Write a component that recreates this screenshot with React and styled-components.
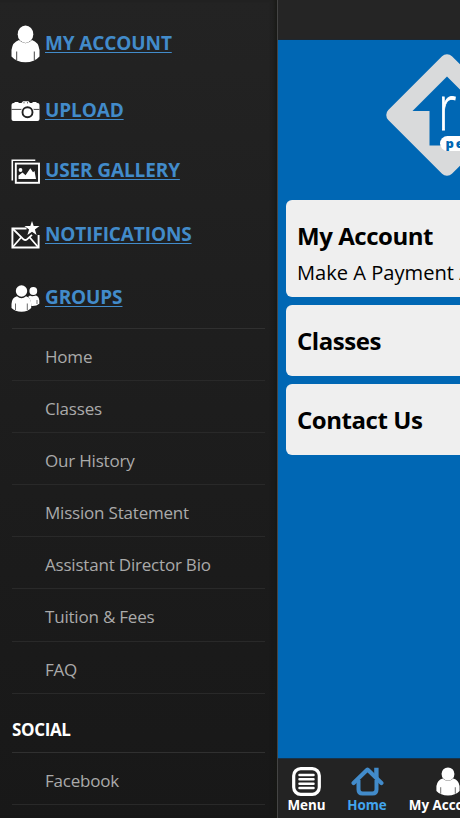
import React from "react";
import styled, { createGlobalStyle } from "styled-components";

const menuItems = [
  { label: "MY ACCOUNT", icon: PersonIcon, height: 88 },
  { label: "UPLOAD", icon: CameraIcon, height: 46 },
  { label: "USER GALLERY", icon: GalleryIcon, height: 75 },
  { label: "NOTIFICATIONS", icon: EnvelopeIcon, height: 52 },
  { label: "GROUPS", icon: GroupIcon, height: 66.5, offset: 8 },
];

const groupLinks = [
  "Home",
  "Classes",
  "Our History",
  "Mission Statement",
  "Assistant Director Bio",
  "Tuition & Fees",
  "FAQ",
];

const App = () => {
  return (
    <>
      <GlobalStyle />
      <Screen>
        <Sidebar>
          <nav>
            {menuItems.map(({ label, icon: Icon, height, offset }) => (
              <MenuItem key={label} $height={height} $offset={offset}>
                <Icon />
                <MenuLink href="#">{label}</MenuLink>
              </MenuItem>
            ))}
          </nav>
          <LinkList>
            {groupLinks.map((label) => (
              <LinkRow key={label}>{label}</LinkRow>
            ))}
          </LinkList>
          <SectionTitle>SOCIAL</SectionTitle>
          <LinkList>
            <LinkRow>Facebook</LinkRow>
          </LinkList>
        </Sidebar>
        <Main>
          <TopBar />
          <Content>
            <LogoWrap>
              <Logo />
            </LogoWrap>
            <Cards>
              <Card $height={97} $offset={10}>
                <CardTitle>My Account</CardTitle>
                <CardText>Make A Payment And More</CardText>
              </Card>
              <Card $height={71} $offset={1}>
                <CardTitle>Classes</CardTitle>
              </Card>
              <Card $height={71} $offset={1}>
                <CardTitle>Contact Us</CardTitle>
              </Card>
            </Cards>
          </Content>
          <TabBar>
            <Tab $width={57}>
              <MenuIcon />
              <span>Menu</span>
            </Tab>
            <Tab $width={64} $active>
              <HomeIcon />
              <span>Home</span>
            </Tab>
            <Tab $width={98}>
              <PersonIcon width={24} height={29} />
              <span>My Account</span>
            </Tab>
          </TabBar>
        </Main>
      </Screen>
    </>
  );
};

export default App;

function PersonIcon({ width = 29, height = 38 }) {
  return (
    <svg width={width} height={height} viewBox="0 0 29 38" preserveAspectRatio="none">
      <path
        d="M8 15Q1.500 17 .5 25v6.500Q5.500 37.300 14.500 37.300T28.500 31.500V25Q27.500 17 21 15Q14.500 21.500 8 15Z"
        fill="#fff"
      />
      <ellipse cx="14.500" cy="9.200" rx="7.800" ry="8.700" fill="#fff" />
      <path d="M5.700 26.500v8.500M23.300 26.500v8.500" stroke="#444" strokeWidth="1" />
    </svg>
  );
}

function CameraIcon() {
  return (
    <svg width="29" height="20" viewBox="0 0 29 20">
      <path d="M3.500 1h4v2h-4zM10.500 2 12 .3h5.500L19 2v1h-8.500zM21.500 1h4v2h-4z" fill="#fff" />
      <rect x=".5" y="2" width="28" height="18" rx="2" fill="#fff" />
      <path d="M.5 8.400h28" stroke="#333" strokeWidth=".9" />
      <path d="M12.500 1.800h1M16 1.800h1" stroke="#333" strokeWidth="1" />
      <circle cx="16.500" cy="11.200" r="6.700" fill="#fff" />
      <circle cx="16.500" cy="11.200" r="5" fill="#fff" stroke="#222" strokeWidth="1.900" />
    </svg>
  );
}

function GalleryIcon() {
  return (
    <svg width="29" height="25" viewBox="0 0 29 25">
      <path d="M1.300 21.500V1.200h23" fill="none" stroke="#fff" strokeWidth="1.600" />
      <rect x="4.800" y="4.600" width="23.200" height="19.200" fill="none" stroke="#fff" strokeWidth="1.900" />
      <path d="M7.500 20v-3.500l4-3 3 2.800 4.800-7 2.700 4 1.500-1.300L25 20Z" fill="#fff" />
      <circle cx="9.500" cy="11" r="1.900" fill="#fff" />
    </svg>
  );
}

function EnvelopeIcon() {
  return (
    <svg width="29" height="28" viewBox="0 0 29 28">
      <path
        d="M15.500 7.500H1.400v19h26.200V14"
        fill="none"
        stroke="#fff"
        strokeWidth="1.900"
      />
      <path
        d="M1.500 7.500 12.500 18.300q1.800 1.500 3.500 0l5-4.500M1.800 26l8.200-9.500M27 26l-8.200-9.500"
        fill="none"
        stroke="#fff"
        strokeWidth="1.800"
      />
      <path
        d="m21 0 1.700 5h5.800l-4.600 3.500 1.700 5.500-4.600-3.300-4.600 3.300 1.700-5.500-4.600-3.500h5.800Z"
        fill="#fff"
      />
    </svg>
  );
}

function GroupIcon() {
  return (
    <svg width="29" height="27" viewBox="0 0 29 27">
      <path d="M19 10.500q1.500 1.500 6 0 3 1 3.300 5v3.300q-3 2.600-8 2.200Q20 14 17 12Z" fill="#fff" />
      <circle cx="22.300" cy="6" r="3.900" fill="#fff" />
      <path d="M26 15v4" stroke="#333" strokeWidth=".7" />
      <path
        d="M6 11.200Q.8 12.500 .5 19v4Q4 26.700 10.500 26.700T20.200 23v-4Q20 12.500 15 11.200q-4.500 4-9 0Z"
        fill="#fff"
      />
      <circle cx="10.500" cy="6" r="5.700" fill="#fff" />
      <path d="M4.500 18.500V25M16.300 18.500V25" stroke="#444" strokeWidth=".8" />
    </svg>
  );
}

function MenuIcon() {
  return (
    <svg width="29" height="29" viewBox="0 0 29 29">
      <rect x="1.700" y="1.700" width="25.600" height="25.600" rx="7" fill="none" stroke="#fff" strokeWidth="3.200" />
      <path
        d="M7.500 8h14M7.500 12.300h14M7.500 16.700h14M7.500 21h14"
        stroke="#fff"
        strokeWidth="2.500"
        strokeLinecap="round"
      />
    </svg>
  );
}

function HomeIcon() {
  return (
    <svg width="33" height="29" viewBox="0 0 33 29">
      <path d="M23.200 .8h4.400V12l-4.400-4z" fill="#428bca" />
      <path
        d="M2.600 16 16.500 2.600 30.400 16"
        fill="none"
        stroke="#428bca"
        strokeWidth="4.200"
        strokeLinejoin="round"
        strokeLinecap="round"
      />
      <path
        d="M7.500 13v9.500q0 4 4 4h10q4 0 4-4V13"
        fill="none"
        stroke="#428bca"
        strokeWidth="4"
      />
    </svg>
  );
}

function Logo() {
  return (
    <svg width="124" height="124" viewBox="0 0 124 124">
      <rect
        x="17"
        y="17"
        width="90"
        height="90"
        rx="7"
        fill="#d9dadb"
        transform="rotate(45 62 62)"
      />
      <path d="M62 23.500 96.500 58H79.500V92.500H44.500V58H27.500Z" fill="#0067b4" />
      <LogoLetters transform="translate(53.300 76.500) scale(.74 1)">r</LogoLetters>
      <rect x="55" y="83" width="62" height="15" rx="7.500" fill="#fff" />
      <LogoCaption x="60.500" y="94.500">pe</LogoCaption>
    </svg>
  );
}

const GlobalStyle = createGlobalStyle`
  * {
    box-sizing: border-box;
  }
  body {
    margin: 0;
    overflow: hidden;
    font-family: "Open Sans", "Noto Sans", sans-serif;
    background: #1b1b1b;
  }
`;
const Screen = styled.div`
  display: flex;
  width: 460px;
  height: 818px;
  overflow: hidden;
`;
const Sidebar = styled.aside`
  flex: 0 0 277px;
  padding: 0 12px 0 11px;
  background: linear-gradient(#232323, #1d1d1d 50%, #181818);
  box-shadow: inset -5px 0 5px -3px #171814;
`;
const MenuItem = styled.div`
  display: flex;
  align-items: center;
  gap: 5px;
  height: ${(props) => props.$height}px;
  padding-top: ${(props) => props.$offset || 0}px;
  svg {
    flex-shrink: 0;
  }
`;
const MenuLink = styled.a`
  margin-bottom: 3px;
  color: #428bca;
  font-size: 19px;
  font-weight: 700;
  line-height: 24px;
  letter-spacing: -0.12px;
  white-space: nowrap;
  text-decoration: underline;
  text-decoration-thickness: 1px;
  text-underline-offset: 2px;
`;
const LinkList = styled.ul`
  margin: 0 0 0 1px;
  padding: 0;
  list-style: none;
  border-top: 1px solid #303030;
`;
const LinkRow = styled.li`
  height: 52.2px;
  padding: 4px 0 0 33px;
  border-bottom: 1px solid #292929;
  color: #aaa;
  font-size: 17px;
  line-height: 48px;
  letter-spacing: -0.2px;
`;
const SectionTitle = styled.div`
  height: 58px;
  padding: 12px 0 0 1px;
  color: #fff;
  font-size: 17px;
  font-weight: 700;
  line-height: 48px;
  letter-spacing: -0.35px;
`;
const Main = styled.main`
  display: flex;
  flex-direction: column;
  flex: 0 0 460px;
  border-left: 1px solid #444;
  background: #0067b4;
`;
const TopBar = styled.header`
  height: 40px;
  background: #252525;
  border-bottom: 1px solid #1d2730;
`;
const Content = styled.div`
  flex: 1;
`;
const LogoWrap = styled.div`
  height: 160.4px;
  padding: 13px 0 0 107px;
`;
const LogoLetters = styled.text`
  fill: #fff;
  stroke: #fff;
  stroke-width: 0.8px;
  font-size: 62px;
  font-weight: 300;
`;
const LogoCaption = styled.text`
  fill: #0067b4;
  font-size: 13px;
  font-weight: 800;
  letter-spacing: 2px;
`;
const Cards = styled.div`
  display: flex;
  flex-direction: column;
  gap: 8px;
  padding: 0 8px;
`;
const Card = styled.section`
  display: flex;
  flex-direction: column;
  justify-content: center;
  height: ${(props) => props.$height}px;
  padding: ${(props) => props.$offset || 0}px 11px 0;
  border-radius: 6px;
  background: #efefef;
  color: #000;
`;
const CardTitle = styled.h2`
  margin: 0;
  font-size: 24px;
  font-weight: 700;
  line-height: 38px;
  letter-spacing: -0.45px;
`;
const CardText = styled.div`
  font-size: 20.1px;
  line-height: 35px;
  white-space: nowrap;
`;
const TabBar = styled.footer`
  display: flex;
  height: 60px;
  background: #232323;
  border-top: 1px solid #17334b;
`;
const Tab = styled.div`
  display: flex;
  flex-direction: column;
  align-items: center;
  flex: 0 0 ${(props) => props.$width}px;
  padding-top: 8px;
  color: ${(props) => (props.$active ? "#42a5ee" : "#fff")};
  font-size: 13.4px;
  font-weight: 700;
  line-height: 18px;
  white-space: nowrap;
`;
